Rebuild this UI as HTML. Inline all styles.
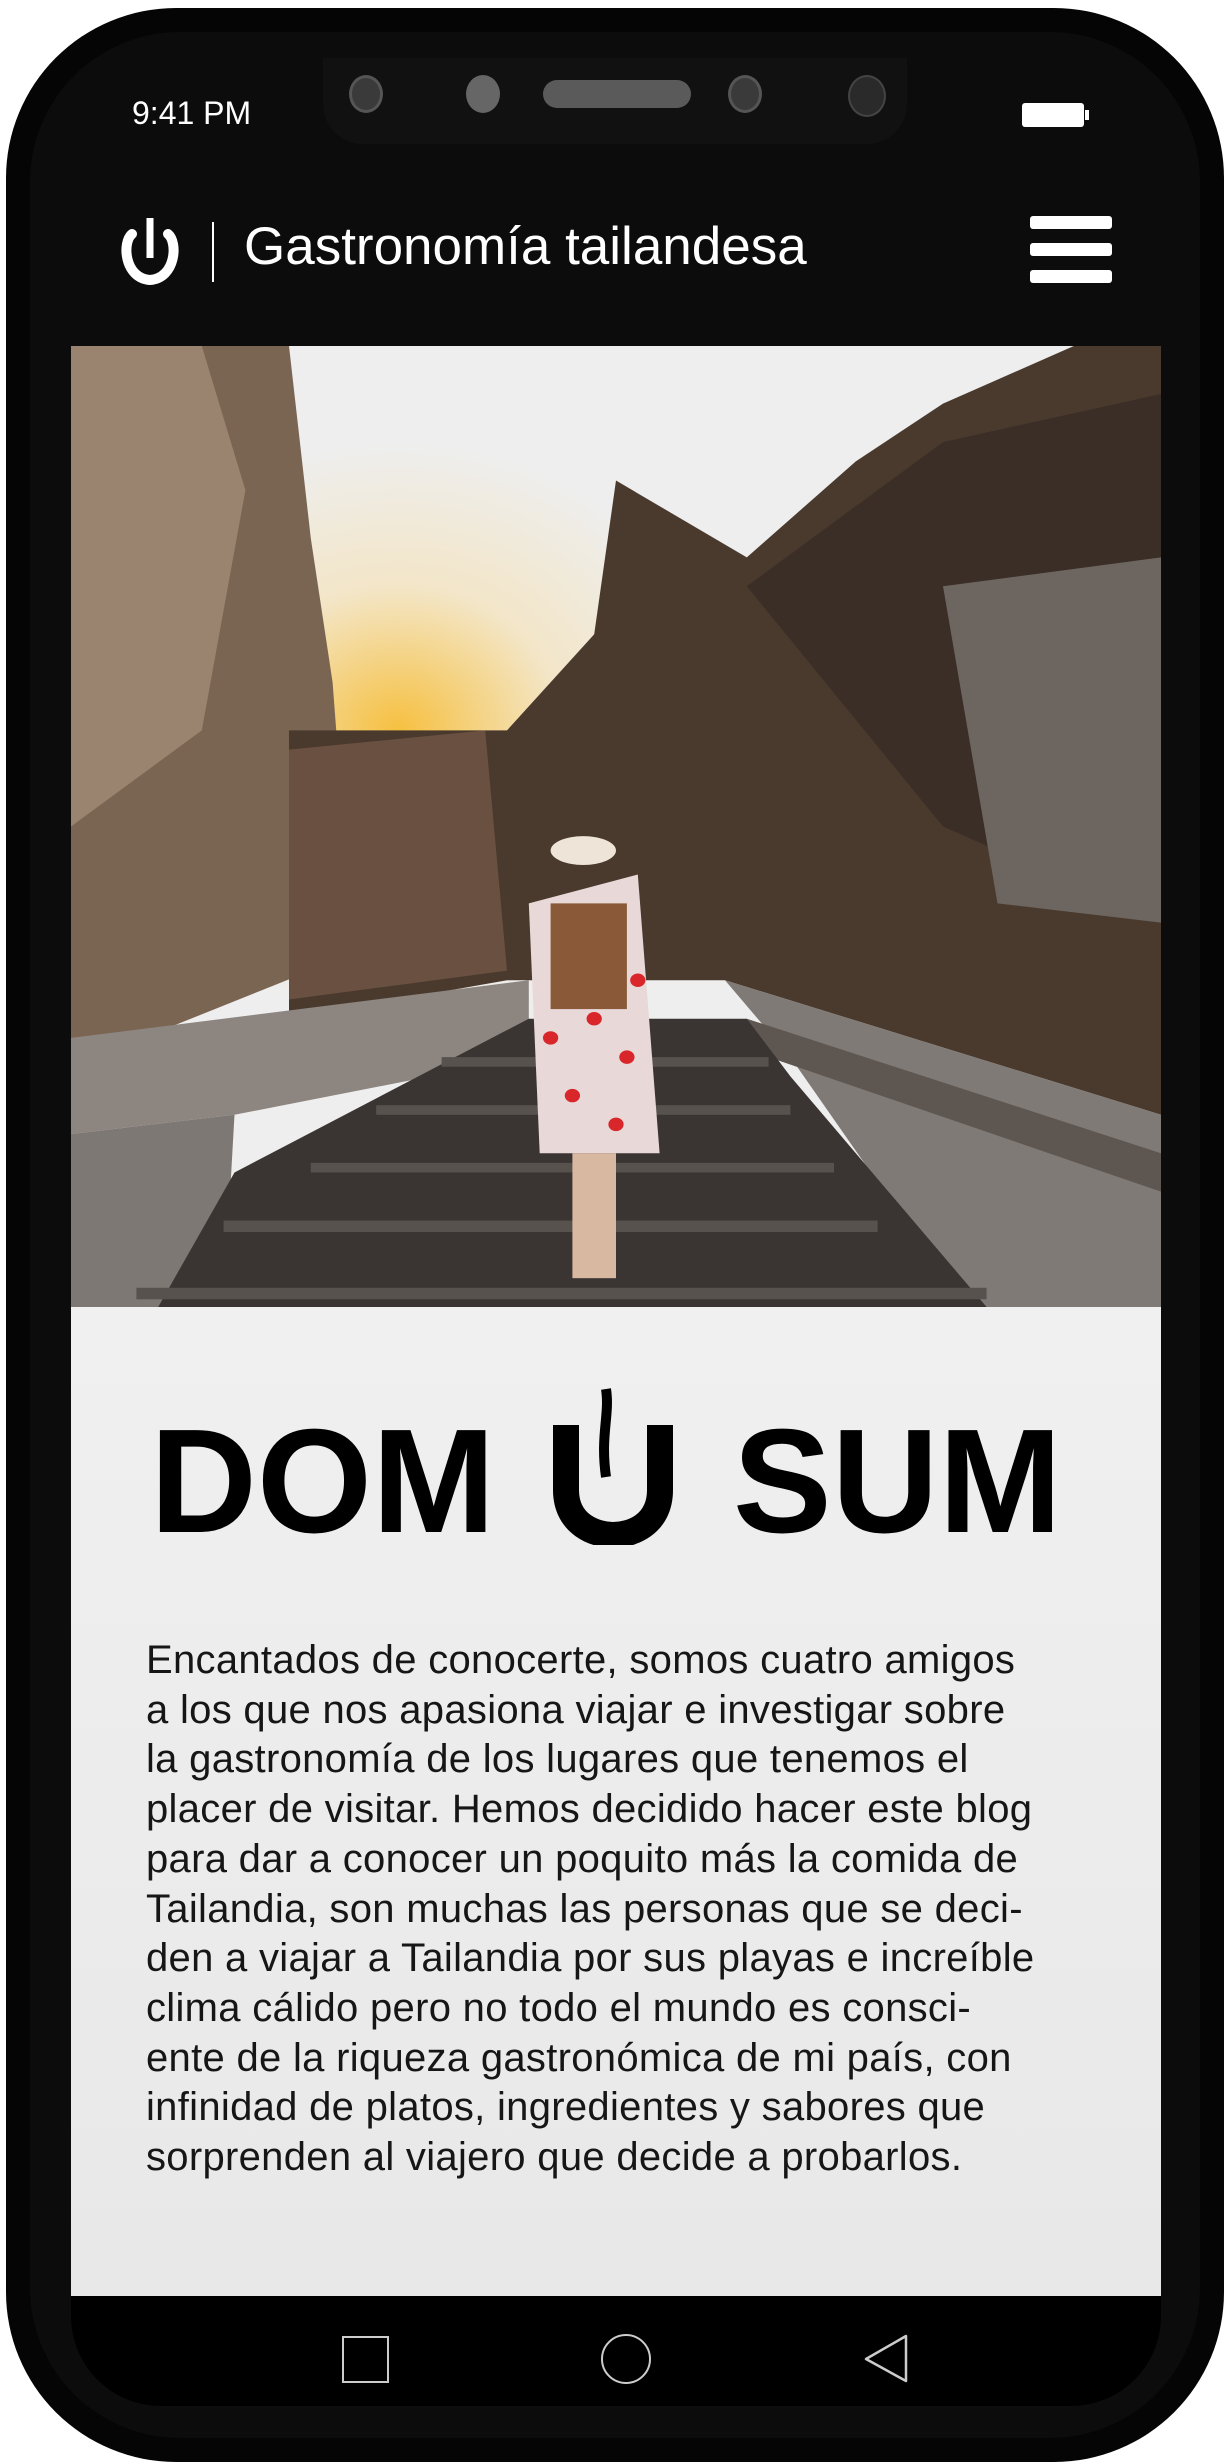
<!DOCTYPE html>
<html><head><meta charset="utf-8"><style>
html,body{margin:0;padding:0;background:#fff;}
body{width:1232px;height:2464px;position:relative;overflow:hidden;font-family:"Liberation Sans",sans-serif;}
.phone{position:absolute;left:6px;top:8px;width:1218px;height:2454px;background:#050505;border-radius:170px;}
.inner{position:absolute;left:24px;top:24px;width:1170px;height:2406px;background:#0c0c0c;border-radius:150px;}
.notch{position:absolute;left:323px;top:58px;width:584px;height:86px;background:#111;border-radius:0 0 40px 40px;}
.cam{position:absolute;top:75px;width:34px;height:38px;border-radius:50%;background:#555;}
.img{position:absolute;left:71px;top:346px;width:1090px;height:961px;overflow:hidden;}
.content{position:absolute;left:71px;top:1307px;width:1090px;height:989px;background:linear-gradient(#f0f0f0,#e8e8e8);}
.nav{position:absolute;left:71px;top:2296px;width:1090px;height:110px;background:#000;border-radius:0 0 90px 90px;}
p{position:absolute;left:146px;top:1636px;margin:0;font-family:"Liberation Sans",sans-serif;font-size:40px;line-height:49.7px;color:#161616;white-space:nowrap;letter-spacing:0.3px;}
.logo{position:absolute;top:1408px;font-family:"Liberation Sans",sans-serif;font-weight:bold;font-size:148px;line-height:1;color:#000;white-space:nowrap;}
</style></head><body>
<div class="phone"><div class="inner"></div></div>
<div class="notch"></div>
<div class="cam" style="left:349px;background:#3a3a3a;border:3px solid #555;width:28px;height:32px"></div>
<div class="cam" style="left:466px;background:#666"></div>
<div style="position:absolute;left:543px;top:80px;width:148px;height:28px;border-radius:14px;background:#5a5a5a"></div>
<div class="cam" style="left:728px;background:#3a3a3a;border:3px solid #555;width:28px;height:32px"></div>
<div class="cam" style="left:848px;background:#2a2a2a;border:2px solid #444"></div>
<div style="position:absolute;left:132px;top:95px;color:#fff;font-size:32px;">9:41 PM</div>
<div style="position:absolute;left:1022px;top:103px;width:62px;height:24px;background:#fff;border-radius:3px"></div>
<div style="position:absolute;left:1085px;top:110px;width:4px;height:10px;background:#fff"></div>
<svg style="position:absolute;left:118px;top:212px" width="64" height="76" viewBox="0 0 64 76"><path d="M14 22 C4 30 6 66 32 68 C58 66 60 30 50 22" fill="none" stroke="#fff" stroke-width="10" stroke-linecap="round"/><path d="M32 6 V46" stroke="#fff" stroke-width="7"/></svg>
<div style="position:absolute;left:212px;top:222px;width:2px;height:60px;background:#fff"></div>
<div style="position:absolute;left:244px;top:216px;color:#fff;font-size:53px;">Gastronomía tailandesa</div>
<div style="position:absolute;left:1030px;top:216px;width:82px;height:13px;background:#fff;border-radius:3px"></div>
<div style="position:absolute;left:1030px;top:243px;width:82px;height:13px;background:#fff;border-radius:3px"></div>
<div style="position:absolute;left:1030px;top:270px;width:82px;height:13px;background:#fff;border-radius:3px"></div>
<div class="img"><svg width="1090" height="961" viewBox="0 0 100 100" preserveAspectRatio="none">
<defs><radialGradient id="g" cx="0.3" cy="0.4" r="0.3"><stop offset="0" stop-color="#f6c040"/><stop offset="0.5" stop-color="#f3e6c8"/><stop offset="1" stop-color="#eeeeee"/></radialGradient></defs>
<rect width="100" height="100" fill="url(#g)"/>
<polygon points="0,0 20,0 22,20 24,35 25,50 22,65 0,75" fill="#7a6552"/>
<polygon points="0,0 12,0 16,15 12,40 0,50" fill="#9a8470"/>
<polygon points="20,40 40,40 48,30 50,14 62,22 72,12 80,6 92,0 100,0 100,80 60,66 40,66 20,70" fill="#4a3a2e"/>
<polygon points="62,25 80,10 100,5 100,60 80,50" fill="#3a2e26"/>
<polygon points="80,25 100,22 100,60 85,58" fill="#6d6660"/>
<polygon points="20,42 38,40 40,65 20,68" fill="#6a5040"/>
<polygon points="0,72 42,66 42,74 15,80 0,82" fill="#8d8580"/>
<polygon points="0,82 15,80 14,100 0,100" fill="#7e7874"/>
<polygon points="60,66 100,80 100,100 82,100 66,74" fill="#807a76"/>
<polygon points="62,70 100,84 100,88 64,74" fill="#5e5650"/>
<polygon points="42,70 62,70 66,76 84,100 8,100 15,86" fill="#3a3432"/>
<g fill="#58524e"><rect x="34" y="74" width="30" height="1"/><rect x="28" y="79" width="38" height="1"/><rect x="22" y="85" width="48" height="1"/><rect x="14" y="91" width="60" height="1.2"/><rect x="6" y="98" width="78" height="1.2"/></g>
<polygon points="42,58 52,55 54,84 43,84" fill="#e8d8d8"/>
<g fill="#d8262a"><circle cx="45" cy="65" r="0.7"/><circle cx="48" cy="70" r="0.7"/><circle cx="51" cy="74" r="0.7"/><circle cx="46" cy="78" r="0.7"/><circle cx="50" cy="81" r="0.7"/><circle cx="44" cy="72" r="0.7"/><circle cx="52" cy="66" r="0.7"/><circle cx="47" cy="60" r="0.7"/></g>
<rect x="44" y="58" width="7" height="11" fill="#8a5a38"/>
<ellipse cx="47" cy="52.5" rx="3" ry="1.5" fill="#eee4d8"/>
<rect x="46" y="84" width="4" height="13" fill="#d8b8a0"/>
</svg></div>
<div class="content"></div>
<div class="logo" style="left:150px;">DOM</div>
<svg style="position:absolute;left:548px;top:1385px" width="130" height="160" viewBox="0 0 130 160"><path d="M18 40 V105 C18 140 48 150 65 150 C83 150 112 140 112 105 V40" fill="none" stroke="#000" stroke-width="26"/><path d="M58 4 C62 30 52 50 58 92" fill="none" stroke="#000" stroke-width="10"/></svg>
<div class="logo" style="left:733px;">SUM</div>
<p>Encantados de conocerte, somos cuatro amigos<br>a los que nos apasiona viajar e investigar sobre<br>la gastronomía de los lugares que tenemos el<br>placer de visitar. Hemos decidido hacer este blog<br>para dar a conocer un poquito más la comida de<br>Tailandia, son muchas las personas que se deci-<br>den a viajar a Tailandia por sus playas e increíble<br>clima cálido pero no todo el mundo es consci-<br>ente de la riqueza gastronómica de mi país, con<br>infinidad de platos, ingredientes y sabores que<br>sorprenden al viajero que decide a probarlos.</p>
<div class="nav"></div>
<div style="position:absolute;left:342px;top:2336px;width:43px;height:43px;border:2px solid #ccc"></div>
<div style="position:absolute;left:601px;top:2334px;width:46px;height:46px;border:2px solid #ccc;border-radius:50%"></div>
<svg style="position:absolute;left:862px;top:2334px" width="50" height="50" viewBox="0 0 50 50"><path d="M44 2 V47 L4 25 Z" fill="none" stroke="#ccc" stroke-width="2.5" stroke-linejoin="round"/></svg>
</body></html>
